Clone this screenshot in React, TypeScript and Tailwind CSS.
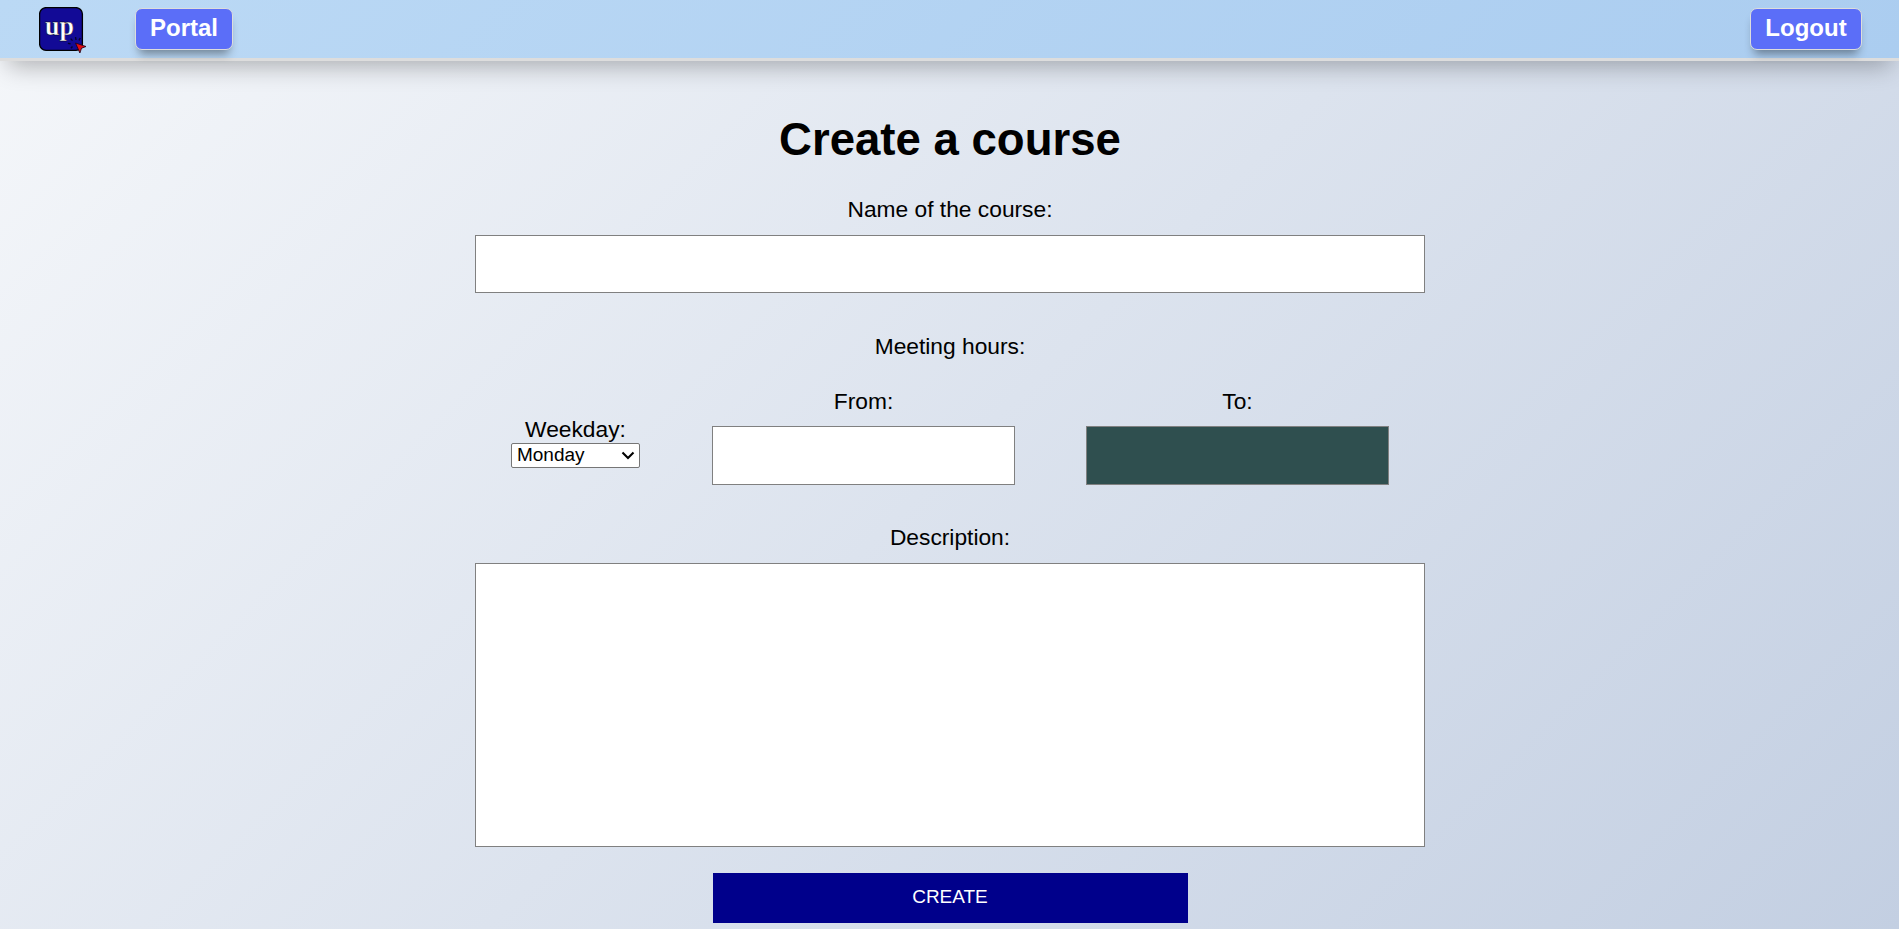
import type { ReactNode } from "react";

const days = ["Monday", "Tuesday", "Wednesday", "Thursday", "Friday"];

function Logo() {
  return (
    <svg className="block h-[47px] w-[48px]" viewBox="0 0 48 47" aria-label="up">
      <rect x="0.600" y="0.600" width="42.800" height="42.800" rx="6.500" fill="#120a96" stroke="#000" strokeWidth="1.300" />
      <text x="6" y="28" fontFamily="Liberation Serif, serif" fontWeight="bold" fontSize="27" textLength="29" lengthAdjust="spacingAndGlyphs" fill="#fff" stroke="#000" strokeWidth="0.400">
        up
      </text>
      <path d="M37 33l-.5-3M33.500 33.600l-1.800-2M31.500 36.800l-2.600-.4M33.500 39.500l-1.600 1.800M40 33.400l1.200-2.400" stroke="#04042c" strokeWidth="1.400" fill="none" />
      <path d="M36.500 36l10.500 3.500-4.500 1.800-1.600 4.700z" fill="#e00d14" stroke="#1a0010" strokeWidth="0.800" />
    </svg>
  );
}

function NavButton({ children, className }: { children: ReactNode; className: string }) {
  return (
    <button
      className={`${className} h-[42px] rounded-[7px] border border-[#ddd] bg-[#5b6ef8] pb-[3px] text-[24px] leading-[36px] font-bold text-white shadow-[0_8px_10px_-4px_rgba(0,0,0,0.4)]`}
    >
      {children}
    </button>
  );
}

function Field({ label, className, children }: { label: string; className: string; children: ReactNode }) {
  return (
    <label className={`${className} flex flex-col items-center`}>
      <span className="pl-px leading-[26px]">{label}</span>
      {children}
    </label>
  );
}

export default function App() {
  return (
    <div className="h-[929px] overflow-hidden bg-[linear-gradient(135deg,#f5f7fa_0%,#c3cfe2_100%)] font-['Liberation_Sans',Arial,sans-serif] text-[1.2vw] text-black">
      <header className="flex h-[61px] items-start border-b-[3px] border-[#ddd] bg-[linear-gradient(135deg,#bbd9f5_0%,#abcdf0_100%)] pr-[37px] pl-[39px] shadow-[0_13px_24px_-8px_rgba(0,0,0,0.29)]">
        <div className="mt-[6.5px] mr-[48px]">
          <Logo />
        </div>
        <NavButton className="mt-2 w-[98px]">Portal</NavButton>
        <NavButton className="mt-2 ml-auto w-[112px]">Logout</NavButton>
      </header>
      <main className="mx-auto flex w-[950px] flex-col items-center pt-[52px]">
        <h1 className="pl-px text-[2.4vw] leading-[53px] font-bold">Create a course</h1>
        <Field label="Name of the course:" className="mt-[30px] w-full">
          <input className="mt-[13px] h-[58px] w-full border border-[#808080] bg-white px-3 outline-none" />
        </Field>
        <p className="mt-[40px] pl-px leading-[26px]">Meeting hours:</p>
        <div className="mt-[29px] flex w-full items-center pl-[36px]">
          <label className="mt-[12px] mr-[72px] flex w-[129px] flex-col items-center">
            <span className="-mt-px mb-px pl-px leading-[26px]">Weekday:</span>
            <span className="relative block h-[25px] w-full">
              <select className="block h-full w-full appearance-none rounded-[2px] border border-[#767676] bg-white pb-px pl-[5.5px] text-[1vw] leading-[22px] outline-none">
                {days.map((day) => (
                  <option key={day}>{day}</option>
                ))}
              </select>
              <svg className="pointer-events-none absolute top-[8px] right-[5px] h-[9px] w-[14px]" viewBox="0 0 14 9">
                <path d="M1.500 1.500L7 7l5.500-5.500" fill="none" stroke="#000" strokeWidth="2.100" />
              </svg>
            </span>
          </label>
          <Field label="From:" className="mr-[71px] w-[303px]">
            <input className="mt-[12px] h-[59px] w-full border border-[#808080] bg-white px-3 outline-none" />
          </Field>
          <Field label="To:" className="w-[303px]">
            <input className="mt-[12px] h-[59px] w-full border border-[#808080] bg-[#2f4f4f] px-3 text-white outline-none" />
          </Field>
        </div>
        <Field label="Description:" className="mt-[39px] w-full">
          <textarea className="mt-[13px] h-[284px] w-full resize-none border border-[#808080] bg-white p-3 outline-none" />
        </Field>
        <button className="mt-[26px] ml-[2px] h-[50px] w-[475px] bg-[#00008b] pr-px pb-[2px] text-[1vw] text-white">CREATE</button>
      </main>
    </div>
  );
}
